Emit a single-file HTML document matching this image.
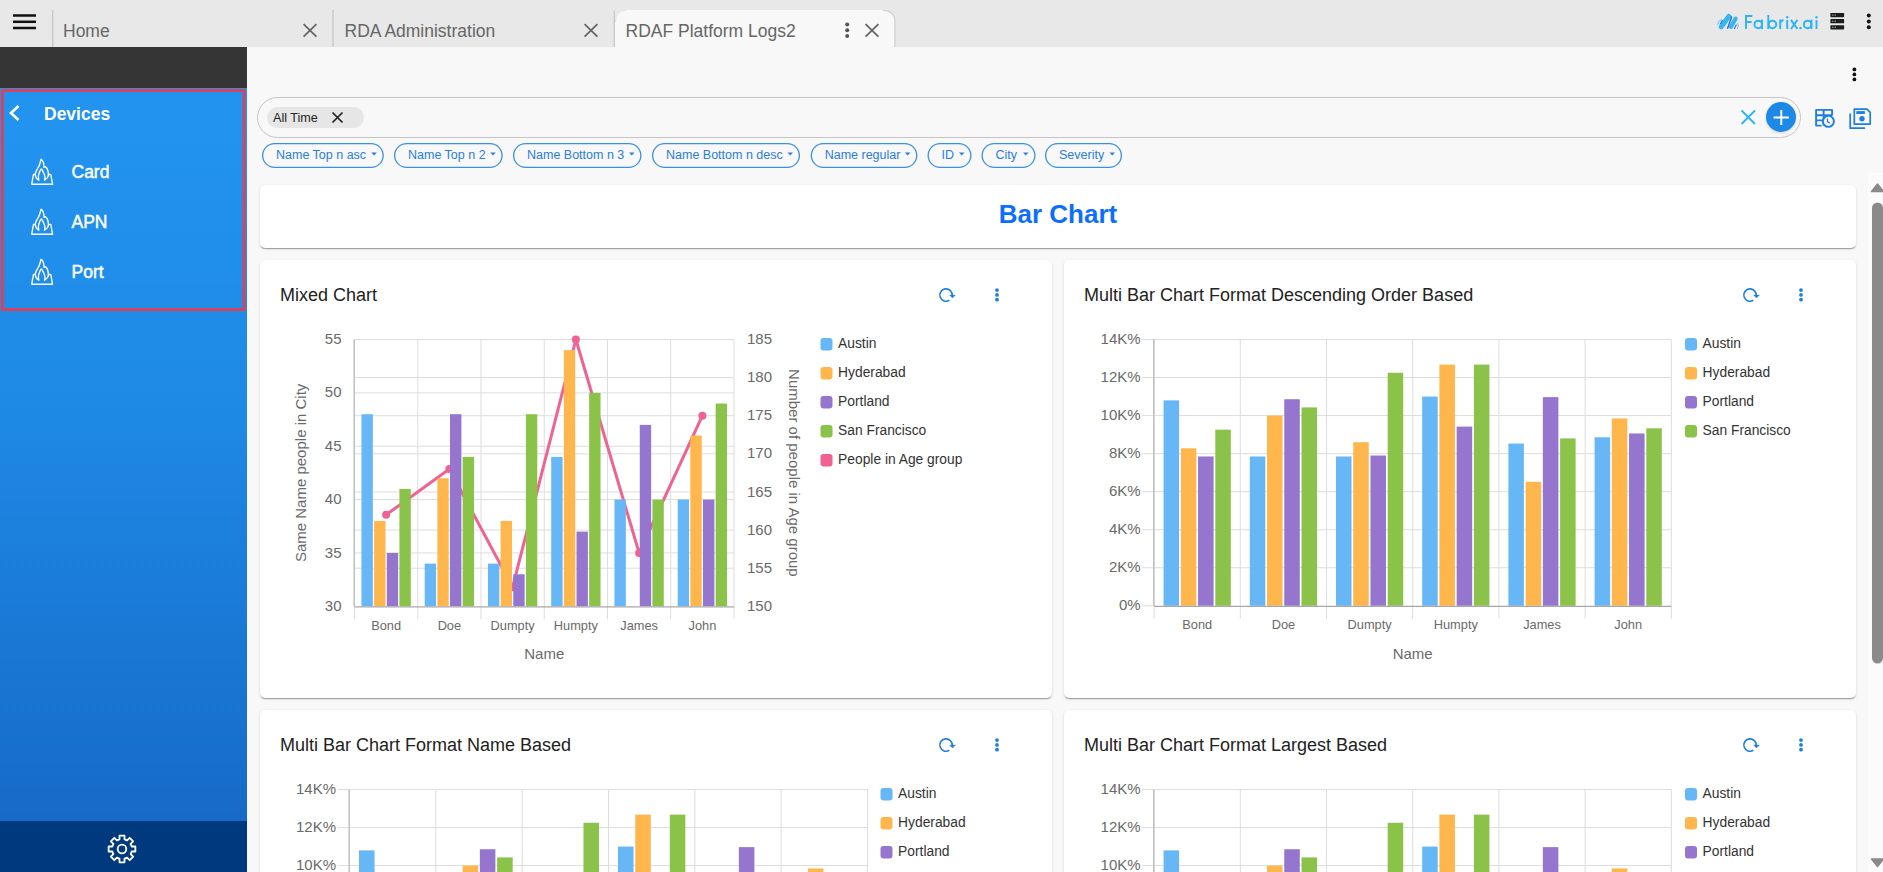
<!DOCTYPE html>
<html><head><meta charset="utf-8"><title>RDAF Platform Logs2</title>
<style>
html,body{margin:0;padding:0;width:1883px;height:872px;overflow:hidden;background:#f8f8f8;font-family:"Liberation Sans", sans-serif;}
svg{position:absolute;left:0;top:0;}
svg text{font-family:"Liberation Sans", sans-serif;}
.card{position:absolute;background:#fff;border-radius:5px;box-shadow:0 2px 1px -1px rgba(0,0,0,.2),0 1px 1px 0 rgba(0,0,0,.14),0 1px 3px 0 rgba(0,0,0,.12);}
</style></head><body>
<svg width="1883" height="872" viewBox="0 0 1883 872" style="z-index:0">
<rect x="0" y="0" width="1883" height="47" fill="#e8e8e8"/>
<rect x="13" y="14.25" width="23" height="2.5" fill="#111"/>
<rect x="13" y="20.55" width="23" height="2.5" fill="#111"/>
<rect x="13" y="26.75" width="23" height="2.5" fill="#111"/>
<rect x="52" y="10" width="1.3" height="37" fill="#c2c8cd"/>
<rect x="332.3" y="10" width="1.3" height="37" fill="#c2c8cd"/>
<path d="M615,47 L615,22 Q615,10 627,10 L883,10 Q895,10 895,22 L895,47 Z" fill="#f8f8f8"/>
<path d="M614.3,47 L614.3,10.5" fill="none" stroke="#c2c8cd" stroke-width="1.3"/>
<path d="M615.4,22 Q615.4,10.2 627,10.2" fill="none" stroke="#e0e3e6" stroke-width="0.9"/>
<path d="M883,10.3 Q894.9,10.5 894.9,22 L894.9,47" fill="none" stroke="#cdd2d7" stroke-width="1.3"/>
<text x="63" y="36.8" font-size="17.5" fill="#666">Home</text>
<text x="344.5" y="36.8" font-size="17.5" fill="#666">RDA Administration</text>
<text x="625.5" y="36.8" font-size="17.5" fill="#666">RDAF Platform Logs2</text>
<path d="M303.6,24.2 L316.4,36.7 M316.4,24.2 L303.6,36.7" stroke="#666" stroke-width="1.8"/>
<path d="M584.6,24.2 L597.4,36.7 M597.4,24.2 L584.6,36.7" stroke="#666" stroke-width="1.8"/>
<path d="M865.6,24.2 L878.4,36.7 M878.4,24.2 L865.6,36.7" stroke="#666" stroke-width="1.8"/>
<circle cx="847.2" cy="24.55" r="2.0" fill="#555"/><circle cx="847.2" cy="30.3" r="2.0" fill="#555"/><circle cx="847.2" cy="36.05" r="2.0" fill="#555"/>
<g stroke-linecap="round" fill="none">
<path d="M1717.8,24.5 Q1718.5,20.5 1721.5,19.8" stroke="#6cc8f2" stroke-width="1.1"/>
<path d="M1721.2,26.8 L1728.8,16.4" stroke="#36b6f2" stroke-width="5"/>
<path d="M1731,26.8 L1735.6,18.6" stroke="#36b6f2" stroke-width="4.2"/>
<path d="M1727.6,28.2 L1731.6,17" stroke="#2b6fd0" stroke-width="1.4"/>
<path d="M1720.5,23.5 L1722.5,20.5" stroke="#2b6fd0" stroke-width="1.1"/>
<path d="M1734.5,28.4 L1736.2,25" stroke="#2b6fd0" stroke-width="1.1"/>
<path d="M1737.8,23.5 Q1739.2,26 1737.5,28.6" stroke="#6cc8f2" stroke-width="1"/>
</g>
<g stroke="#2cb5f4" stroke-width="1.95" fill="none">
<path d="M1752.4,16 L1746,16 L1746,29 M1746,21.9 L1751.6,21.9"/>
<circle cx="1758.2" cy="24.4" r="3.75"/><path d="M1762,19.6 L1762,29"/>
<path d="M1768.3,15 L1768.3,29"/><circle cx="1772.5" cy="24.4" r="3.75"/>
<path d="M1780.2,19.6 L1780.2,29 M1780.2,23 Q1780.6,20.4 1783.6,20.3"/>
<path d="M1787.2,20 L1787.2,29"/>
<path d="M1791,19.9 L1797.4,29 M1797.4,19.9 L1791,29"/>
<circle cx="1807.6" cy="24.4" r="3.75"/><path d="M1811.5,19.6 L1811.5,29"/>
<path d="M1816.5,20 L1816.5,29"/>
</g>
<g fill="#2cb5f4"><circle cx="1787.2" cy="17.3" r="1.2"/><circle cx="1800.5" cy="28" r="1.25"/><circle cx="1816.5" cy="17.3" r="1.2"/></g>
<rect x="1830.4" y="13" width="13.7" height="4.2" rx="0.6" fill="#1c1c1c"/>
<rect x="1832.2" y="14.5" width="1.2" height="1.2" fill="#8fb8d8"/><rect x="1834.6" y="14.5" width="1.2" height="1.2" fill="#8fbf98"/>
<rect x="1830.4" y="19.1" width="13.7" height="4.2" rx="0.6" fill="#1c1c1c"/>
<rect x="1832.2" y="20.6" width="1.2" height="1.2" fill="#8fb8d8"/><rect x="1834.6" y="20.6" width="1.2" height="1.2" fill="#8fbf98"/>
<rect x="1830.4" y="25.2" width="13.7" height="4.2" rx="0.6" fill="#1c1c1c"/>
<rect x="1832.2" y="26.7" width="1.2" height="1.2" fill="#8fb8d8"/><rect x="1834.6" y="26.7" width="1.2" height="1.2" fill="#8fbf98"/>
<circle cx="1868.8" cy="15.5" r="2.0" fill="#111"/><circle cx="1868.8" cy="21.4" r="2.0" fill="#111"/><circle cx="1868.8" cy="27.3" r="2.0" fill="#111"/>
<rect x="0" y="47" width="247" height="41" fill="#353535"/>
<defs><linearGradient id="sb" x1="0" y1="0" x2="0" y2="1"><stop offset="0" stop-color="#2294ef"/><stop offset="0.43" stop-color="#1e8ae6"/><stop offset="1" stop-color="#176ac8"/></linearGradient></defs>
<rect x="0" y="88" width="247" height="733" fill="url(#sb)"/>
<rect x="0" y="821" width="247" height="51" fill="#01397f"/>
<rect x="2.5" y="90.5" width="241.5" height="219" fill="none" stroke="#d5445f" stroke-width="3"/>
<path d="M18.5,106 L11,113 L18.5,120" fill="none" stroke="#fff" stroke-width="2.6"/>
<text x="44" y="120" font-size="17.5" font-weight="bold" fill="#fff">Devices</text>
<g transform="translate(27,155)" fill="none" stroke="#fff" stroke-width="1.35" stroke-linejoin="round" stroke-linecap="round">
<path d="M8.2,19.5 L6.45,19.5 L4.7,29.2 L25.5,29.2 L23.8,19.5 L21.8,19.5"/>
<path d="M11.7,25 C11.3,24.63 9.87,23.8 9.3,22.8 C8.73,21.8 8.25,20.23 8.3,19 C8.35,17.77 8.95,16.8 9.6,15.4 C10.25,14 11.55,12.13 12.2,10.6 C12.85,9.07 13.2,7.25 13.5,6.2 C13.8,5.15 13.68,4.4 14,4.3 C14.32,4.2 14.98,4.95 15.4,5.6 C15.82,6.25 16.2,7.07 16.5,8.2 C16.8,9.33 17.08,11.7 17.2,12.4"/>
<path d="M17.2,12.4 C17.38,12.27 17.8,11.35 18.3,11.6 C18.8,11.85 19.7,12.8 20.2,13.9 C20.7,15 21.2,16.85 21.3,18.2 C21.4,19.55 21.42,20.87 20.8,22 C20.18,23.13 18.13,24.5 17.6,25"/>
<path d="M17.6,25 C17.65,24.47 18.03,22.92 17.9,21.8 C17.77,20.68 17.38,19.6 16.8,18.3 C16.22,17 15.1,14.22 14.4,14 C13.7,13.78 13.1,15.83 12.6,17 C12.1,18.17 11.55,19.67 11.4,21 C11.25,22.33 11.65,24.33 11.7,25"/>
</g>
<text x="71.5" y="177.8" font-size="17.5" fill="#fff" stroke="#fff" stroke-width="0.45">Card</text>
<g transform="translate(27,205)" fill="none" stroke="#fff" stroke-width="1.35" stroke-linejoin="round" stroke-linecap="round">
<path d="M8.2,19.5 L6.45,19.5 L4.7,29.2 L25.5,29.2 L23.8,19.5 L21.8,19.5"/>
<path d="M11.7,25 C11.3,24.63 9.87,23.8 9.3,22.8 C8.73,21.8 8.25,20.23 8.3,19 C8.35,17.77 8.95,16.8 9.6,15.4 C10.25,14 11.55,12.13 12.2,10.6 C12.85,9.07 13.2,7.25 13.5,6.2 C13.8,5.15 13.68,4.4 14,4.3 C14.32,4.2 14.98,4.95 15.4,5.6 C15.82,6.25 16.2,7.07 16.5,8.2 C16.8,9.33 17.08,11.7 17.2,12.4"/>
<path d="M17.2,12.4 C17.38,12.27 17.8,11.35 18.3,11.6 C18.8,11.85 19.7,12.8 20.2,13.9 C20.7,15 21.2,16.85 21.3,18.2 C21.4,19.55 21.42,20.87 20.8,22 C20.18,23.13 18.13,24.5 17.6,25"/>
<path d="M17.6,25 C17.65,24.47 18.03,22.92 17.9,21.8 C17.77,20.68 17.38,19.6 16.8,18.3 C16.22,17 15.1,14.22 14.4,14 C13.7,13.78 13.1,15.83 12.6,17 C12.1,18.17 11.55,19.67 11.4,21 C11.25,22.33 11.65,24.33 11.7,25"/>
</g>
<text x="71.5" y="227.8" font-size="17.5" fill="#fff" stroke="#fff" stroke-width="0.45">APN</text>
<g transform="translate(27,255)" fill="none" stroke="#fff" stroke-width="1.35" stroke-linejoin="round" stroke-linecap="round">
<path d="M8.2,19.5 L6.45,19.5 L4.7,29.2 L25.5,29.2 L23.8,19.5 L21.8,19.5"/>
<path d="M11.7,25 C11.3,24.63 9.87,23.8 9.3,22.8 C8.73,21.8 8.25,20.23 8.3,19 C8.35,17.77 8.95,16.8 9.6,15.4 C10.25,14 11.55,12.13 12.2,10.6 C12.85,9.07 13.2,7.25 13.5,6.2 C13.8,5.15 13.68,4.4 14,4.3 C14.32,4.2 14.98,4.95 15.4,5.6 C15.82,6.25 16.2,7.07 16.5,8.2 C16.8,9.33 17.08,11.7 17.2,12.4"/>
<path d="M17.2,12.4 C17.38,12.27 17.8,11.35 18.3,11.6 C18.8,11.85 19.7,12.8 20.2,13.9 C20.7,15 21.2,16.85 21.3,18.2 C21.4,19.55 21.42,20.87 20.8,22 C20.18,23.13 18.13,24.5 17.6,25"/>
<path d="M17.6,25 C17.65,24.47 18.03,22.92 17.9,21.8 C17.77,20.68 17.38,19.6 16.8,18.3 C16.22,17 15.1,14.22 14.4,14 C13.7,13.78 13.1,15.83 12.6,17 C12.1,18.17 11.55,19.67 11.4,21 C11.25,22.33 11.65,24.33 11.7,25"/>
</g>
<text x="71.5" y="277.8" font-size="17.5" fill="#fff" stroke="#fff" stroke-width="0.45">Port</text>
<path d="M119.5,839.32 L119.5,835.63 L124.5,835.63 L124.5,839.32 A10.0,10.0 0 0 1 127.08,840.39 L129.69,837.78 L133.22,841.31 L130.61,843.92 A10.0,10.0 0 0 1 131.68,846.5 L135.37,846.5 L135.37,851.5 L131.68,851.5 A10.0,10.0 0 0 1 130.61,854.08 L133.22,856.69 L129.69,860.22 L127.08,857.61 A10.0,10.0 0 0 1 124.5,858.68 L124.5,862.37 L119.5,862.37 L119.5,858.68 A10.0,10.0 0 0 1 116.92,857.61 L114.31,860.22 L110.78,856.69 L113.39,854.08 A10.0,10.0 0 0 1 112.32,851.5 L108.63,851.5 L108.63,846.5 L112.32,846.5 A10.0,10.0 0 0 1 113.39,843.92 L110.78,841.31 L114.31,837.78 L116.92,840.39 A10.0,10.0 0 0 1 119.5,839.32 Z" fill="none" stroke="#fff" stroke-width="1.8" stroke-linejoin="round"/>
<circle cx="122" cy="849" r="4.3" fill="none" stroke="#fff" stroke-width="1.8"/>
<rect x="247" y="47" width="1636" height="825" fill="#f8f8f8"/>
<circle cx="1854.4" cy="69.4" r="1.9" fill="#111"/><circle cx="1854.4" cy="74.4" r="1.9" fill="#111"/><circle cx="1854.4" cy="79.4" r="1.9" fill="#111"/>
<rect x="257.5" y="97.5" width="1543" height="40" rx="20" fill="#f8f8f8" stroke="#c4c4c4" stroke-width="1"/>
<rect x="267" y="107" width="97" height="21" rx="10.5" fill="#e6e6e6"/>
<text x="273" y="121.8" font-size="12.6" fill="#222">All Time</text>
<path d="M332.5,112.5 L342.5,122.5 M342.5,112.5 L332.5,122.5" stroke="#222" stroke-width="1.7"/>
<path d="M1741.5,110.5 L1755,124 M1755,110.5 L1741.5,124" stroke="#29b6f6" stroke-width="1.8"/>
<circle cx="1781" cy="118" r="15.2" fill="rgba(0,0,0,0.12)" filter="url(#blur)"/>
<defs><filter id="blur" x="-50%" y="-50%" width="200%" height="200%"><feGaussianBlur stdDeviation="1.5"/></filter></defs>
<circle cx="1781" cy="117" r="15" fill="#1e88e5"/>
<path d="M1773.6,117.5 L1788.8,117.5 M1781.3,110 L1781.3,125" stroke="#fff" stroke-width="1.9"/>
<g fill="none" stroke="#1e7fe0" stroke-width="1.9">
<path d="M1821.5,125.6 L1816.4,125.6 Q1816.1,125.6 1816.1,125.3 L1816.1,110.2 Q1816.1,109.9 1816.4,109.9 L1831.8,109.9 Q1832.1,109.9 1832.1,110.2 L1832.1,115.5"/>
<path d="M1816.1,115.2 L1832.1,115.2 M1816.1,120.4 L1822.5,120.4 M1823.6,109.9 L1823.6,125.6"/>
<circle cx="1828.4" cy="121.4" r="5.5" fill="#f8f8f8"/>
</g>
<path d="M1827.5,118.6 L1827.5,121.6 L1829.8,123.2" fill="none" stroke="#1e7fe0" stroke-width="1.3"/>
<path d="M1850.2,113.4 L1850.2,128.2 L1865,128.2" fill="none" stroke="#1e7fe0" stroke-width="1.7"/>
<path d="M1854.3,109.1 L1867,109.1 L1870.2,112.3 L1870.2,124.1 L1854.3,124.1 Z" fill="none" stroke="#1e7fe0" stroke-width="1.7" stroke-linejoin="round"/>
<rect x="1856.3" y="111.1" width="8.6" height="2.9" fill="#1e7fe0"/>
<circle cx="1862" cy="118.8" r="2.7" fill="#1e7fe0"/>
<rect x="262.65" y="143.6" width="120.5" height="23.8" rx="11.9" fill="none" stroke="#3b90e6" stroke-width="1.3"/>
<text x="276" y="158.6" font-size="12.5" fill="#2a7de1">Name Top n asc</text>
<path d="M371.3,152.6 L376.8,152.6 L374.05,155.4 Z" fill="#2a7de1"/>
<rect x="394.65" y="143.6" width="107.4" height="23.8" rx="11.9" fill="none" stroke="#3b90e6" stroke-width="1.3"/>
<text x="408" y="158.6" font-size="12.5" fill="#2a7de1">Name Top n 2</text>
<path d="M490.2,152.6 L495.7,152.6 L492.95,155.4 Z" fill="#2a7de1"/>
<rect x="513.65" y="143.6" width="127.2" height="23.8" rx="11.9" fill="none" stroke="#3b90e6" stroke-width="1.3"/>
<text x="527" y="158.6" font-size="12.5" fill="#2a7de1">Name Bottom n 3</text>
<path d="M629,152.6 L634.5,152.6 L631.75,155.4 Z" fill="#2a7de1"/>
<rect x="652.65" y="143.6" width="146.7" height="23.8" rx="11.9" fill="none" stroke="#3b90e6" stroke-width="1.3"/>
<text x="666" y="158.6" font-size="12.5" fill="#2a7de1">Name Bottom n desc</text>
<path d="M787.5,152.6 L793,152.6 L790.25,155.4 Z" fill="#2a7de1"/>
<rect x="811.35" y="143.6" width="105.4" height="23.8" rx="11.9" fill="none" stroke="#3b90e6" stroke-width="1.3"/>
<text x="824.7" y="158.6" font-size="12.5" fill="#2a7de1">Name regular</text>
<path d="M904.9,152.6 L910.4,152.6 L907.65,155.4 Z" fill="#2a7de1"/>
<rect x="928.15" y="143.6" width="42.7" height="23.8" rx="11.9" fill="none" stroke="#3b90e6" stroke-width="1.3"/>
<text x="941.5" y="158.6" font-size="12.5" fill="#2a7de1">ID</text>
<path d="M959,152.6 L964.5,152.6 L961.75,155.4 Z" fill="#2a7de1"/>
<rect x="982.15" y="143.6" width="52.7" height="23.8" rx="11.9" fill="none" stroke="#3b90e6" stroke-width="1.3"/>
<text x="995.5" y="158.6" font-size="12.5" fill="#2a7de1">City</text>
<path d="M1023,152.6 L1028.5,152.6 L1025.75,155.4 Z" fill="#2a7de1"/>
<rect x="1045.65" y="143.6" width="75.7" height="23.8" rx="11.9" fill="none" stroke="#3b90e6" stroke-width="1.3"/>
<text x="1059" y="158.6" font-size="12.5" fill="#2a7de1">Severity</text>
<path d="M1109.5,152.6 L1115,152.6 L1112.25,155.4 Z" fill="#2a7de1"/>
</svg>
<div class="card" style="left:260px;top:185px;width:1596px;height:63px;z-index:1"></div>
<div class="card" style="left:260px;top:260px;width:792px;height:438px;z-index:1"></div>
<div class="card" style="left:1064px;top:260px;width:792px;height:438px;z-index:1"></div>
<div class="card" style="left:260px;top:710px;width:792px;height:400px;z-index:1"></div>
<div class="card" style="left:1064px;top:710px;width:792px;height:400px;z-index:1"></div>
<svg width="1883" height="872" viewBox="0 0 1883 872" style="z-index:2">
<text x="1058" y="223" font-size="26" font-weight="bold" fill="#0d6efd" text-anchor="middle">Bar Chart</text>
<text x="280" y="301" font-size="18" fill="#222">Mixed Chart</text>
<path d="M952.2,295.6 A6.2,6.2 0 1 0 949.3,300.3" fill="none" stroke="#1e7fe0" stroke-width="1.6"/>
<path d="M949.6,295.1 L955.4,295.1 L952.5,298 Z" fill="#1e7fe0" stroke="#1e7fe0" stroke-width="0.4" stroke-linejoin="round"/>
<circle cx="997" cy="290.1" r="1.9" fill="#1e7fe0"/><circle cx="997" cy="294.9" r="1.9" fill="#1e7fe0"/><circle cx="997" cy="299.7" r="1.9" fill="#1e7fe0"/>
<line x1="354.5" y1="568.19" x2="734" y2="568.19" stroke="#dddddd" stroke-width="1"/>
<line x1="354.5" y1="530.07" x2="734" y2="530.07" stroke="#dddddd" stroke-width="1"/>
<line x1="354.5" y1="491.96" x2="734" y2="491.96" stroke="#dddddd" stroke-width="1"/>
<line x1="354.5" y1="453.84" x2="734" y2="453.84" stroke="#dddddd" stroke-width="1"/>
<line x1="354.5" y1="415.73" x2="734" y2="415.73" stroke="#dddddd" stroke-width="1"/>
<line x1="354.5" y1="377.61" x2="734" y2="377.61" stroke="#dddddd" stroke-width="1"/>
<line x1="354.5" y1="552.94" x2="734" y2="552.94" stroke="#dddddd" stroke-width="1"/>
<line x1="354.5" y1="499.58" x2="734" y2="499.58" stroke="#dddddd" stroke-width="1"/>
<line x1="354.5" y1="446.22" x2="734" y2="446.22" stroke="#dddddd" stroke-width="1"/>
<line x1="354.5" y1="392.86" x2="734" y2="392.86" stroke="#dddddd" stroke-width="1"/>
<line x1="354.5" y1="339.5" x2="734" y2="339.5" stroke="#dddddd" stroke-width="1"/>
<line x1="354.5" y1="339.5" x2="354.5" y2="619.3" stroke="#dddddd" stroke-width="1"/>
<line x1="417.75" y1="339.5" x2="417.75" y2="619.3" stroke="#dddddd" stroke-width="1"/>
<line x1="481" y1="339.5" x2="481" y2="619.3" stroke="#dddddd" stroke-width="1"/>
<line x1="544.25" y1="339.5" x2="544.25" y2="619.3" stroke="#dddddd" stroke-width="1"/>
<line x1="607.5" y1="339.5" x2="607.5" y2="619.3" stroke="#dddddd" stroke-width="1"/>
<line x1="670.75" y1="339.5" x2="670.75" y2="619.3" stroke="#dddddd" stroke-width="1"/>
<line x1="734" y1="339.5" x2="734" y2="619.3" stroke="#dddddd" stroke-width="1"/>
<line x1="354.5" y1="339.5" x2="734" y2="339.5" stroke="#dddddd" stroke-width="1"/>
<polyline points="386.12,514.83 449.38,469.09 512.62,587.24 575.88,339.5 639.12,552.94 702.38,415.73" fill="none" stroke="#f06292" stroke-width="3" stroke-linejoin="round"/>
<circle cx="386.12" cy="514.83" r="4" fill="#f06292"/>
<circle cx="449.38" cy="469.09" r="4" fill="#f06292"/>
<circle cx="512.62" cy="587.24" r="4" fill="#f06292"/>
<circle cx="575.88" cy="339.5" r="4" fill="#f06292"/>
<circle cx="639.12" cy="552.94" r="4" fill="#f06292"/>
<circle cx="702.38" cy="415.73" r="4" fill="#f06292"/>
<rect x="361.46" y="414.2" width="11.38" height="192.1" fill="#67b7f7"/>
<rect x="374.11" y="520.92" width="11.38" height="85.38" fill="#ffb74d"/>
<rect x="386.76" y="552.94" width="11.38" height="53.36" fill="#9575cd"/>
<rect x="399.41" y="488.91" width="11.38" height="117.39" fill="#8bc34a"/>
<rect x="424.71" y="563.61" width="11.38" height="42.69" fill="#67b7f7"/>
<rect x="437.36" y="478.24" width="11.38" height="128.06" fill="#ffb74d"/>
<rect x="450.01" y="414.2" width="11.38" height="192.1" fill="#9575cd"/>
<rect x="462.66" y="456.89" width="11.38" height="149.41" fill="#8bc34a"/>
<rect x="487.96" y="563.61" width="11.38" height="42.69" fill="#67b7f7"/>
<rect x="500.61" y="520.92" width="11.38" height="85.38" fill="#ffb74d"/>
<rect x="513.26" y="574.28" width="11.38" height="32.02" fill="#9575cd"/>
<rect x="525.91" y="414.2" width="11.38" height="192.1" fill="#8bc34a"/>
<rect x="551.21" y="456.89" width="11.38" height="149.41" fill="#67b7f7"/>
<rect x="563.86" y="350.17" width="11.38" height="256.13" fill="#ffb74d"/>
<rect x="576.51" y="531.6" width="11.38" height="74.7" fill="#9575cd"/>
<rect x="589.16" y="392.86" width="11.38" height="213.44" fill="#8bc34a"/>
<rect x="614.46" y="499.58" width="11.38" height="106.72" fill="#67b7f7"/>
<rect x="639.76" y="424.88" width="11.38" height="181.42" fill="#9575cd"/>
<rect x="652.41" y="499.58" width="11.38" height="106.72" fill="#8bc34a"/>
<rect x="677.71" y="499.58" width="11.38" height="106.72" fill="#67b7f7"/>
<rect x="690.36" y="435.55" width="11.38" height="170.75" fill="#ffb74d"/>
<rect x="703.01" y="499.58" width="11.38" height="106.72" fill="#9575cd"/>
<rect x="715.66" y="403.53" width="11.38" height="202.77" fill="#8bc34a"/>
<line x1="354.2" y1="339.5" x2="354.2" y2="606.3" stroke="#bdbdbd" stroke-width="1.4"/>
<line x1="354.5" y1="606.8" x2="734" y2="606.8" stroke="#a8a8a8" stroke-width="1.3"/>
<text x="341.5" y="610.9" font-size="15" fill="#6a6a6a" text-anchor="end">30</text>
<text x="341.5" y="557.54" font-size="15" fill="#6a6a6a" text-anchor="end">35</text>
<text x="341.5" y="504.18" font-size="15" fill="#6a6a6a" text-anchor="end">40</text>
<text x="341.5" y="450.82" font-size="15" fill="#6a6a6a" text-anchor="end">45</text>
<text x="341.5" y="397.46" font-size="15" fill="#6a6a6a" text-anchor="end">50</text>
<text x="341.5" y="344.1" font-size="15" fill="#6a6a6a" text-anchor="end">55</text>
<text x="747" y="610.9" font-size="15" fill="#6a6a6a">150</text>
<text x="747" y="572.79" font-size="15" fill="#6a6a6a">155</text>
<text x="747" y="534.67" font-size="15" fill="#6a6a6a">160</text>
<text x="747" y="496.56" font-size="15" fill="#6a6a6a">165</text>
<text x="747" y="458.44" font-size="15" fill="#6a6a6a">170</text>
<text x="747" y="420.33" font-size="15" fill="#6a6a6a">175</text>
<text x="747" y="382.21" font-size="15" fill="#6a6a6a">180</text>
<text x="747" y="344.1" font-size="15" fill="#6a6a6a">185</text>
<text x="386.12" y="629.7" font-size="12.8" fill="#6a6a6a" text-anchor="middle">Bond</text>
<text x="449.38" y="629.7" font-size="12.8" fill="#6a6a6a" text-anchor="middle">Doe</text>
<text x="512.62" y="629.7" font-size="12.8" fill="#6a6a6a" text-anchor="middle">Dumpty</text>
<text x="575.88" y="629.7" font-size="12.8" fill="#6a6a6a" text-anchor="middle">Humpty</text>
<text x="639.12" y="629.7" font-size="12.8" fill="#6a6a6a" text-anchor="middle">James</text>
<text x="702.38" y="629.7" font-size="12.8" fill="#6a6a6a" text-anchor="middle">John</text>
<text x="544.25" y="659.3" font-size="15" fill="#6a6a6a" text-anchor="middle">Name</text>
<text transform="translate(306.3,472.9) rotate(-90)" font-size="15" fill="#6a6a6a" text-anchor="middle">Same Name people in City</text>
<text transform="translate(788.5,472.9) rotate(90)" font-size="15" fill="#6a6a6a" text-anchor="middle">Number of people in Age group</text>
<rect x="820.5" y="338" width="12" height="12.5" rx="3" fill="#67b7f7"/>
<text x="838.1" y="348" font-size="13.8" fill="#333">Austin</text>
<rect x="820.5" y="367" width="12" height="12.5" rx="3" fill="#ffb74d"/>
<text x="838.1" y="377" font-size="13.8" fill="#333">Hyderabad</text>
<rect x="820.5" y="396" width="12" height="12.5" rx="3" fill="#9575cd"/>
<text x="838.1" y="406" font-size="13.8" fill="#333">Portland</text>
<rect x="820.5" y="425" width="12" height="12.5" rx="3" fill="#8bc34a"/>
<text x="838.1" y="435" font-size="13.8" fill="#333">San Francisco</text>
<rect x="820.5" y="454" width="12" height="12.5" rx="3" fill="#f06292"/>
<text x="838.1" y="464" font-size="13.8" fill="#333">People in Age group</text>
<text x="1084" y="301" font-size="18" fill="#222">Multi Bar Chart Format Descending Order Based</text>
<path d="M1756.2,295.6 A6.2,6.2 0 1 0 1753.3,300.3" fill="none" stroke="#1e7fe0" stroke-width="1.6"/>
<path d="M1753.6,295.1 L1759.4,295.1 L1756.5,298 Z" fill="#1e7fe0" stroke="#1e7fe0" stroke-width="0.4" stroke-linejoin="round"/>
<circle cx="1801" cy="290.1" r="1.9" fill="#1e7fe0"/><circle cx="1801" cy="294.9" r="1.9" fill="#1e7fe0"/><circle cx="1801" cy="299.7" r="1.9" fill="#1e7fe0"/>
<line x1="1142.1" y1="567.76" x2="1671.3" y2="567.76" stroke="#dddddd" stroke-width="1"/>
<line x1="1142.1" y1="529.71" x2="1671.3" y2="529.71" stroke="#dddddd" stroke-width="1"/>
<line x1="1142.1" y1="491.67" x2="1671.3" y2="491.67" stroke="#dddddd" stroke-width="1"/>
<line x1="1142.1" y1="453.63" x2="1671.3" y2="453.63" stroke="#dddddd" stroke-width="1"/>
<line x1="1142.1" y1="415.59" x2="1671.3" y2="415.59" stroke="#dddddd" stroke-width="1"/>
<line x1="1142.1" y1="377.54" x2="1671.3" y2="377.54" stroke="#dddddd" stroke-width="1"/>
<line x1="1142.1" y1="339.5" x2="1671.3" y2="339.5" stroke="#dddddd" stroke-width="1"/>
<line x1="1142.1" y1="605.8" x2="1154.1" y2="605.8" stroke="#dddddd" stroke-width="1"/>
<line x1="1154.1" y1="339.5" x2="1154.1" y2="618.8" stroke="#dddddd" stroke-width="1"/>
<line x1="1240.3" y1="339.5" x2="1240.3" y2="618.8" stroke="#dddddd" stroke-width="1"/>
<line x1="1326.5" y1="339.5" x2="1326.5" y2="618.8" stroke="#dddddd" stroke-width="1"/>
<line x1="1412.7" y1="339.5" x2="1412.7" y2="618.8" stroke="#dddddd" stroke-width="1"/>
<line x1="1498.9" y1="339.5" x2="1498.9" y2="618.8" stroke="#dddddd" stroke-width="1"/>
<line x1="1585.1" y1="339.5" x2="1585.1" y2="618.8" stroke="#dddddd" stroke-width="1"/>
<line x1="1671.3" y1="339.5" x2="1671.3" y2="618.8" stroke="#dddddd" stroke-width="1"/>
<rect x="1163.58" y="400.37" width="15.52" height="205.43" fill="#67b7f7"/>
<rect x="1180.82" y="448.3" width="15.52" height="157.5" fill="#ffb74d"/>
<rect x="1198.06" y="456.48" width="15.52" height="149.32" fill="#9575cd"/>
<rect x="1215.3" y="429.66" width="15.52" height="176.14" fill="#8bc34a"/>
<rect x="1249.78" y="456.48" width="15.52" height="149.32" fill="#67b7f7"/>
<rect x="1267.02" y="415.59" width="15.52" height="190.21" fill="#ffb74d"/>
<rect x="1284.26" y="399.23" width="15.52" height="206.57" fill="#9575cd"/>
<rect x="1301.5" y="407.41" width="15.52" height="198.39" fill="#8bc34a"/>
<rect x="1335.98" y="456.48" width="15.52" height="149.32" fill="#67b7f7"/>
<rect x="1353.22" y="442.22" width="15.52" height="163.58" fill="#ffb74d"/>
<rect x="1370.46" y="455.53" width="15.52" height="150.27" fill="#9575cd"/>
<rect x="1387.7" y="372.79" width="15.52" height="233.01" fill="#8bc34a"/>
<rect x="1422.18" y="396.56" width="15.52" height="209.24" fill="#67b7f7"/>
<rect x="1439.42" y="364.61" width="15.52" height="241.19" fill="#ffb74d"/>
<rect x="1456.66" y="426.62" width="15.52" height="179.18" fill="#9575cd"/>
<rect x="1473.9" y="364.61" width="15.52" height="241.19" fill="#8bc34a"/>
<rect x="1508.38" y="443.55" width="15.52" height="162.25" fill="#67b7f7"/>
<rect x="1525.62" y="481.78" width="15.52" height="124.02" fill="#ffb74d"/>
<rect x="1542.86" y="397.13" width="15.52" height="208.67" fill="#9575cd"/>
<rect x="1560.1" y="438.41" width="15.52" height="167.39" fill="#8bc34a"/>
<rect x="1594.58" y="437.27" width="15.52" height="168.53" fill="#67b7f7"/>
<rect x="1611.82" y="418.44" width="15.52" height="187.36" fill="#ffb74d"/>
<rect x="1629.06" y="433.47" width="15.52" height="172.33" fill="#9575cd"/>
<rect x="1646.3" y="428.33" width="15.52" height="177.47" fill="#8bc34a"/>
<line x1="1153.8" y1="339.5" x2="1153.8" y2="605.8" stroke="#bdbdbd" stroke-width="1.4"/>
<line x1="1154.1" y1="606.3" x2="1671.3" y2="606.3" stroke="#a8a8a8" stroke-width="1.3"/>
<text x="1140.6" y="610.4" font-size="15" fill="#6a6a6a" text-anchor="end">0%</text>
<text x="1140.6" y="572.36" font-size="15" fill="#6a6a6a" text-anchor="end">2K%</text>
<text x="1140.6" y="534.31" font-size="15" fill="#6a6a6a" text-anchor="end">4K%</text>
<text x="1140.6" y="496.27" font-size="15" fill="#6a6a6a" text-anchor="end">6K%</text>
<text x="1140.6" y="458.23" font-size="15" fill="#6a6a6a" text-anchor="end">8K%</text>
<text x="1140.6" y="420.19" font-size="15" fill="#6a6a6a" text-anchor="end">10K%</text>
<text x="1140.6" y="382.14" font-size="15" fill="#6a6a6a" text-anchor="end">12K%</text>
<text x="1140.6" y="344.1" font-size="15" fill="#6a6a6a" text-anchor="end">14K%</text>
<text x="1197.2" y="629.2" font-size="12.8" fill="#6a6a6a" text-anchor="middle">Bond</text>
<text x="1283.4" y="629.2" font-size="12.8" fill="#6a6a6a" text-anchor="middle">Doe</text>
<text x="1369.6" y="629.2" font-size="12.8" fill="#6a6a6a" text-anchor="middle">Dumpty</text>
<text x="1455.8" y="629.2" font-size="12.8" fill="#6a6a6a" text-anchor="middle">Humpty</text>
<text x="1542" y="629.2" font-size="12.8" fill="#6a6a6a" text-anchor="middle">James</text>
<text x="1628.2" y="629.2" font-size="12.8" fill="#6a6a6a" text-anchor="middle">John</text>
<text x="1412.7" y="658.8" font-size="15" fill="#6a6a6a" text-anchor="middle">Name</text>
<rect x="1685" y="338" width="12" height="12.5" rx="3" fill="#67b7f7"/>
<text x="1702.6" y="348" font-size="13.8" fill="#333">Austin</text>
<rect x="1685" y="367" width="12" height="12.5" rx="3" fill="#ffb74d"/>
<text x="1702.6" y="377" font-size="13.8" fill="#333">Hyderabad</text>
<rect x="1685" y="396" width="12" height="12.5" rx="3" fill="#9575cd"/>
<text x="1702.6" y="406" font-size="13.8" fill="#333">Portland</text>
<rect x="1685" y="425" width="12" height="12.5" rx="3" fill="#8bc34a"/>
<text x="1702.6" y="435" font-size="13.8" fill="#333">San Francisco</text>
<text x="280" y="751" font-size="18" fill="#222">Multi Bar Chart Format Name Based</text>
<path d="M952.2,745.6 A6.2,6.2 0 1 0 949.3,750.3" fill="none" stroke="#1e7fe0" stroke-width="1.6"/>
<path d="M949.6,745.1 L955.4,745.1 L952.5,748 Z" fill="#1e7fe0" stroke="#1e7fe0" stroke-width="0.4" stroke-linejoin="round"/>
<circle cx="997" cy="740.1" r="1.9" fill="#1e7fe0"/><circle cx="997" cy="744.9" r="1.9" fill="#1e7fe0"/><circle cx="997" cy="749.7" r="1.9" fill="#1e7fe0"/>
<line x1="337.5" y1="1017.76" x2="867.5" y2="1017.76" stroke="#dddddd" stroke-width="1"/>
<line x1="337.5" y1="979.71" x2="867.5" y2="979.71" stroke="#dddddd" stroke-width="1"/>
<line x1="337.5" y1="941.67" x2="867.5" y2="941.67" stroke="#dddddd" stroke-width="1"/>
<line x1="337.5" y1="903.63" x2="867.5" y2="903.63" stroke="#dddddd" stroke-width="1"/>
<line x1="337.5" y1="865.59" x2="867.5" y2="865.59" stroke="#dddddd" stroke-width="1"/>
<line x1="337.5" y1="827.54" x2="867.5" y2="827.54" stroke="#dddddd" stroke-width="1"/>
<line x1="337.5" y1="789.5" x2="867.5" y2="789.5" stroke="#dddddd" stroke-width="1"/>
<line x1="337.5" y1="1055.8" x2="349.5" y2="1055.8" stroke="#dddddd" stroke-width="1"/>
<line x1="349.5" y1="789.5" x2="349.5" y2="1068.8" stroke="#dddddd" stroke-width="1"/>
<line x1="435.83" y1="789.5" x2="435.83" y2="1068.8" stroke="#dddddd" stroke-width="1"/>
<line x1="522.17" y1="789.5" x2="522.17" y2="1068.8" stroke="#dddddd" stroke-width="1"/>
<line x1="608.5" y1="789.5" x2="608.5" y2="1068.8" stroke="#dddddd" stroke-width="1"/>
<line x1="694.83" y1="789.5" x2="694.83" y2="1068.8" stroke="#dddddd" stroke-width="1"/>
<line x1="781.17" y1="789.5" x2="781.17" y2="1068.8" stroke="#dddddd" stroke-width="1"/>
<line x1="867.5" y1="789.5" x2="867.5" y2="1068.8" stroke="#dddddd" stroke-width="1"/>
<rect x="359" y="850.37" width="15.54" height="205.43" fill="#67b7f7"/>
<rect x="376.26" y="898.3" width="15.54" height="157.5" fill="#ffb74d"/>
<rect x="393.53" y="906.48" width="15.54" height="149.32" fill="#9575cd"/>
<rect x="410.8" y="879.66" width="15.54" height="176.14" fill="#8bc34a"/>
<rect x="445.33" y="906.48" width="15.54" height="149.32" fill="#67b7f7"/>
<rect x="462.6" y="865.59" width="15.54" height="190.21" fill="#ffb74d"/>
<rect x="479.86" y="849.23" width="15.54" height="206.57" fill="#9575cd"/>
<rect x="497.13" y="857.41" width="15.54" height="198.39" fill="#8bc34a"/>
<rect x="531.66" y="906.48" width="15.54" height="149.32" fill="#67b7f7"/>
<rect x="548.93" y="892.22" width="15.54" height="163.58" fill="#ffb74d"/>
<rect x="566.2" y="905.53" width="15.54" height="150.27" fill="#9575cd"/>
<rect x="583.46" y="822.79" width="15.54" height="233.01" fill="#8bc34a"/>
<rect x="618" y="846.56" width="15.54" height="209.24" fill="#67b7f7"/>
<rect x="635.26" y="814.61" width="15.54" height="241.19" fill="#ffb74d"/>
<rect x="652.53" y="876.62" width="15.54" height="179.18" fill="#9575cd"/>
<rect x="669.8" y="814.61" width="15.54" height="241.19" fill="#8bc34a"/>
<rect x="704.33" y="893.55" width="15.54" height="162.25" fill="#67b7f7"/>
<rect x="721.6" y="931.78" width="15.54" height="124.02" fill="#ffb74d"/>
<rect x="738.86" y="847.13" width="15.54" height="208.67" fill="#9575cd"/>
<rect x="756.13" y="888.41" width="15.54" height="167.39" fill="#8bc34a"/>
<rect x="790.66" y="887.27" width="15.54" height="168.53" fill="#67b7f7"/>
<rect x="807.93" y="868.44" width="15.54" height="187.36" fill="#ffb74d"/>
<rect x="825.2" y="883.47" width="15.54" height="172.33" fill="#9575cd"/>
<rect x="842.46" y="878.33" width="15.54" height="177.47" fill="#8bc34a"/>
<line x1="349.2" y1="789.5" x2="349.2" y2="1055.8" stroke="#bdbdbd" stroke-width="1.4"/>
<line x1="349.5" y1="1056.3" x2="867.5" y2="1056.3" stroke="#a8a8a8" stroke-width="1.3"/>
<text x="336" y="1060.4" font-size="15" fill="#6a6a6a" text-anchor="end">0%</text>
<text x="336" y="1022.36" font-size="15" fill="#6a6a6a" text-anchor="end">2K%</text>
<text x="336" y="984.31" font-size="15" fill="#6a6a6a" text-anchor="end">4K%</text>
<text x="336" y="946.27" font-size="15" fill="#6a6a6a" text-anchor="end">6K%</text>
<text x="336" y="908.23" font-size="15" fill="#6a6a6a" text-anchor="end">8K%</text>
<text x="336" y="870.19" font-size="15" fill="#6a6a6a" text-anchor="end">10K%</text>
<text x="336" y="832.14" font-size="15" fill="#6a6a6a" text-anchor="end">12K%</text>
<text x="336" y="794.1" font-size="15" fill="#6a6a6a" text-anchor="end">14K%</text>
<text x="392.67" y="1079.2" font-size="12.8" fill="#6a6a6a" text-anchor="middle">Bond</text>
<text x="479" y="1079.2" font-size="12.8" fill="#6a6a6a" text-anchor="middle">Doe</text>
<text x="565.33" y="1079.2" font-size="12.8" fill="#6a6a6a" text-anchor="middle">Dumpty</text>
<text x="651.67" y="1079.2" font-size="12.8" fill="#6a6a6a" text-anchor="middle">Humpty</text>
<text x="738" y="1079.2" font-size="12.8" fill="#6a6a6a" text-anchor="middle">James</text>
<text x="824.33" y="1079.2" font-size="12.8" fill="#6a6a6a" text-anchor="middle">John</text>
<text x="608.5" y="1108.8" font-size="15" fill="#6a6a6a" text-anchor="middle">Name</text>
<rect x="880.5" y="788" width="12" height="12.5" rx="3" fill="#67b7f7"/>
<text x="898.1" y="798" font-size="13.8" fill="#333">Austin</text>
<rect x="880.5" y="817" width="12" height="12.5" rx="3" fill="#ffb74d"/>
<text x="898.1" y="827" font-size="13.8" fill="#333">Hyderabad</text>
<rect x="880.5" y="846" width="12" height="12.5" rx="3" fill="#9575cd"/>
<text x="898.1" y="856" font-size="13.8" fill="#333">Portland</text>
<rect x="880.5" y="875" width="12" height="12.5" rx="3" fill="#8bc34a"/>
<text x="898.1" y="885" font-size="13.8" fill="#333">San Francisco</text>
<text x="1084" y="751" font-size="18" fill="#222">Multi Bar Chart Format Largest Based</text>
<path d="M1756.2,745.6 A6.2,6.2 0 1 0 1753.3,750.3" fill="none" stroke="#1e7fe0" stroke-width="1.6"/>
<path d="M1753.6,745.1 L1759.4,745.1 L1756.5,748 Z" fill="#1e7fe0" stroke="#1e7fe0" stroke-width="0.4" stroke-linejoin="round"/>
<circle cx="1801" cy="740.1" r="1.9" fill="#1e7fe0"/><circle cx="1801" cy="744.9" r="1.9" fill="#1e7fe0"/><circle cx="1801" cy="749.7" r="1.9" fill="#1e7fe0"/>
<line x1="1142.1" y1="1017.76" x2="1671.3" y2="1017.76" stroke="#dddddd" stroke-width="1"/>
<line x1="1142.1" y1="979.71" x2="1671.3" y2="979.71" stroke="#dddddd" stroke-width="1"/>
<line x1="1142.1" y1="941.67" x2="1671.3" y2="941.67" stroke="#dddddd" stroke-width="1"/>
<line x1="1142.1" y1="903.63" x2="1671.3" y2="903.63" stroke="#dddddd" stroke-width="1"/>
<line x1="1142.1" y1="865.59" x2="1671.3" y2="865.59" stroke="#dddddd" stroke-width="1"/>
<line x1="1142.1" y1="827.54" x2="1671.3" y2="827.54" stroke="#dddddd" stroke-width="1"/>
<line x1="1142.1" y1="789.5" x2="1671.3" y2="789.5" stroke="#dddddd" stroke-width="1"/>
<line x1="1142.1" y1="1055.8" x2="1154.1" y2="1055.8" stroke="#dddddd" stroke-width="1"/>
<line x1="1154.1" y1="789.5" x2="1154.1" y2="1068.8" stroke="#dddddd" stroke-width="1"/>
<line x1="1240.3" y1="789.5" x2="1240.3" y2="1068.8" stroke="#dddddd" stroke-width="1"/>
<line x1="1326.5" y1="789.5" x2="1326.5" y2="1068.8" stroke="#dddddd" stroke-width="1"/>
<line x1="1412.7" y1="789.5" x2="1412.7" y2="1068.8" stroke="#dddddd" stroke-width="1"/>
<line x1="1498.9" y1="789.5" x2="1498.9" y2="1068.8" stroke="#dddddd" stroke-width="1"/>
<line x1="1585.1" y1="789.5" x2="1585.1" y2="1068.8" stroke="#dddddd" stroke-width="1"/>
<line x1="1671.3" y1="789.5" x2="1671.3" y2="1068.8" stroke="#dddddd" stroke-width="1"/>
<rect x="1163.58" y="850.37" width="15.52" height="205.43" fill="#67b7f7"/>
<rect x="1180.82" y="898.3" width="15.52" height="157.5" fill="#ffb74d"/>
<rect x="1198.06" y="906.48" width="15.52" height="149.32" fill="#9575cd"/>
<rect x="1215.3" y="879.66" width="15.52" height="176.14" fill="#8bc34a"/>
<rect x="1249.78" y="906.48" width="15.52" height="149.32" fill="#67b7f7"/>
<rect x="1267.02" y="865.59" width="15.52" height="190.21" fill="#ffb74d"/>
<rect x="1284.26" y="849.23" width="15.52" height="206.57" fill="#9575cd"/>
<rect x="1301.5" y="857.41" width="15.52" height="198.39" fill="#8bc34a"/>
<rect x="1335.98" y="906.48" width="15.52" height="149.32" fill="#67b7f7"/>
<rect x="1353.22" y="892.22" width="15.52" height="163.58" fill="#ffb74d"/>
<rect x="1370.46" y="905.53" width="15.52" height="150.27" fill="#9575cd"/>
<rect x="1387.7" y="822.79" width="15.52" height="233.01" fill="#8bc34a"/>
<rect x="1422.18" y="846.56" width="15.52" height="209.24" fill="#67b7f7"/>
<rect x="1439.42" y="814.61" width="15.52" height="241.19" fill="#ffb74d"/>
<rect x="1456.66" y="876.62" width="15.52" height="179.18" fill="#9575cd"/>
<rect x="1473.9" y="814.61" width="15.52" height="241.19" fill="#8bc34a"/>
<rect x="1508.38" y="893.55" width="15.52" height="162.25" fill="#67b7f7"/>
<rect x="1525.62" y="931.78" width="15.52" height="124.02" fill="#ffb74d"/>
<rect x="1542.86" y="847.13" width="15.52" height="208.67" fill="#9575cd"/>
<rect x="1560.1" y="888.41" width="15.52" height="167.39" fill="#8bc34a"/>
<rect x="1594.58" y="887.27" width="15.52" height="168.53" fill="#67b7f7"/>
<rect x="1611.82" y="868.44" width="15.52" height="187.36" fill="#ffb74d"/>
<rect x="1629.06" y="883.47" width="15.52" height="172.33" fill="#9575cd"/>
<rect x="1646.3" y="878.33" width="15.52" height="177.47" fill="#8bc34a"/>
<line x1="1153.8" y1="789.5" x2="1153.8" y2="1055.8" stroke="#bdbdbd" stroke-width="1.4"/>
<line x1="1154.1" y1="1056.3" x2="1671.3" y2="1056.3" stroke="#a8a8a8" stroke-width="1.3"/>
<text x="1140.6" y="1060.4" font-size="15" fill="#6a6a6a" text-anchor="end">0%</text>
<text x="1140.6" y="1022.36" font-size="15" fill="#6a6a6a" text-anchor="end">2K%</text>
<text x="1140.6" y="984.31" font-size="15" fill="#6a6a6a" text-anchor="end">4K%</text>
<text x="1140.6" y="946.27" font-size="15" fill="#6a6a6a" text-anchor="end">6K%</text>
<text x="1140.6" y="908.23" font-size="15" fill="#6a6a6a" text-anchor="end">8K%</text>
<text x="1140.6" y="870.19" font-size="15" fill="#6a6a6a" text-anchor="end">10K%</text>
<text x="1140.6" y="832.14" font-size="15" fill="#6a6a6a" text-anchor="end">12K%</text>
<text x="1140.6" y="794.1" font-size="15" fill="#6a6a6a" text-anchor="end">14K%</text>
<text x="1197.2" y="1079.2" font-size="12.8" fill="#6a6a6a" text-anchor="middle">Bond</text>
<text x="1283.4" y="1079.2" font-size="12.8" fill="#6a6a6a" text-anchor="middle">Doe</text>
<text x="1369.6" y="1079.2" font-size="12.8" fill="#6a6a6a" text-anchor="middle">Dumpty</text>
<text x="1455.8" y="1079.2" font-size="12.8" fill="#6a6a6a" text-anchor="middle">Humpty</text>
<text x="1542" y="1079.2" font-size="12.8" fill="#6a6a6a" text-anchor="middle">James</text>
<text x="1628.2" y="1079.2" font-size="12.8" fill="#6a6a6a" text-anchor="middle">John</text>
<text x="1412.7" y="1108.8" font-size="15" fill="#6a6a6a" text-anchor="middle">Name</text>
<rect x="1685" y="788" width="12" height="12.5" rx="3" fill="#67b7f7"/>
<text x="1702.6" y="798" font-size="13.8" fill="#333">Austin</text>
<rect x="1685" y="817" width="12" height="12.5" rx="3" fill="#ffb74d"/>
<text x="1702.6" y="827" font-size="13.8" fill="#333">Hyderabad</text>
<rect x="1685" y="846" width="12" height="12.5" rx="3" fill="#9575cd"/>
<text x="1702.6" y="856" font-size="13.8" fill="#333">Portland</text>
<rect x="1685" y="875" width="12" height="12.5" rx="3" fill="#8bc34a"/>
<text x="1702.6" y="885" font-size="13.8" fill="#333">San Francisco</text>
<rect x="1868" y="173" width="15" height="699" fill="#fbfbfb"/>
<path d="M1871.5,191.5 L1877.5,184 L1883.5,191.5 Z" fill="#8a8a8a" stroke="#8a8a8a" stroke-width="1.5" stroke-linejoin="round"/>
<path d="M1872,658 L1872,208 A5.5,5.5 0 0 1 1883,208 L1883,658 A5.5,5.5 0 0 1 1872,658 Z" fill="#8a8a8a"/>
<path d="M1871.5,859 L1877.5,866.5 L1883.5,859 Z" fill="#8a8a8a" stroke="#8a8a8a" stroke-width="1.5" stroke-linejoin="round"/>
</svg>
</body></html>
